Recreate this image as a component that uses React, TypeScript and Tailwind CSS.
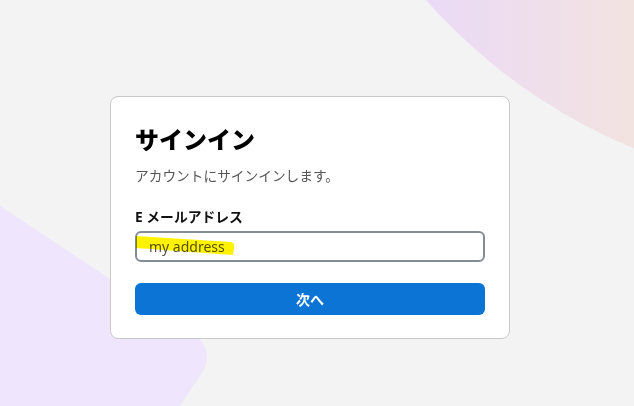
import React from 'react';

const jp = { fontFamily: '"Noto Sans", "Noto Sans CJK JP", sans-serif' };

function Backdrop() {
  return (
    <svg className="absolute inset-0 pointer-events-none" width="634" height="406" viewBox="0 0 634 406">
      <defs>
        <linearGradient id="blob" gradientUnits="userSpaceOnUse" x1="430" y1="0" x2="634" y2="0">
          <stop offset="0" stopColor="#ebdaf6" />
          <stop offset="1" stopColor="#f2e3e0" />
        </linearGradient>
      </defs>
      <circle cx="849" cy="-373" r="564" fill="url(#blob)" />
      <rect x="-700" y="0" width="700" height="700" rx="26" fill="#efe5fd" transform="translate(217 350) rotate(33.6)" />
    </svg>
  );
}

export default function App() {
  return (
    <div className="relative w-[634px] h-[406px] overflow-hidden bg-[#f3f3f3]" style={jp}>
      <Backdrop />
      <div className="relative pt-[96px] pl-[110px]">
        <div className="w-[400px] bg-white border border-[#c9c9cc] rounded-lg px-6 pt-[27px] pb-[23px] flex flex-col">
          <h1 className="text-[24px] leading-8 font-black text-black">サインイン</h1>
          <p className="mt-[10px] text-[13.7px] leading-5 text-[#555]">アカウントにサインインします。</p>
          <label className="mt-[21px] text-[13.8px] leading-5 font-bold text-[#111]">E メールアドレス</label>
          <div className="relative mt-1">
            <input
              readOnly
              defaultValue="my address"
              className="w-full h-[31px] rounded-md border-2 border-[#858c96] bg-white pl-3 text-[14px] text-[#555] outline-none"
              style={jp}
            />
            <svg className="absolute left-0 top-0 pointer-events-none mix-blend-multiply" width="110" height="31">
              <path d="M1 5 L96 11 Q100 12 99 17 L98 24 L1 17 Z" fill="#fff200" />
            </svg>
          </div>
          <button className="mt-[21px] h-8 rounded-md bg-[#0b74d4] text-white text-[14px] font-bold">次へ</button>
        </div>
      </div>
    </div>
  );
}
